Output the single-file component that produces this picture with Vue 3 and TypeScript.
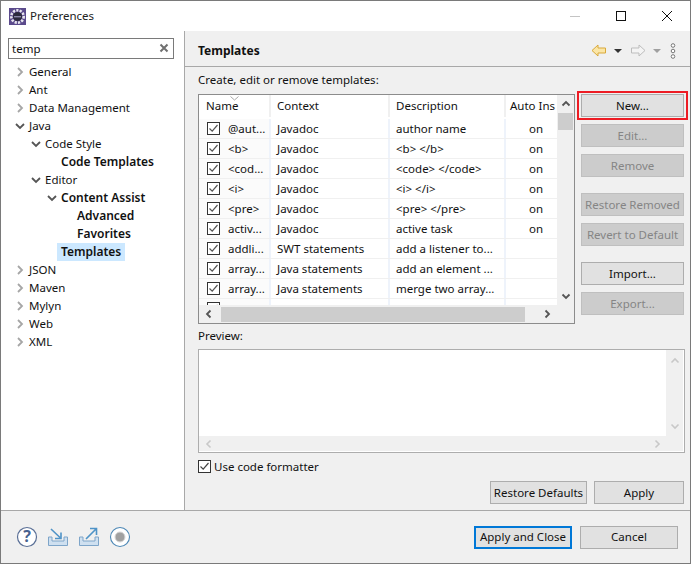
<script setup lang="ts">
interface TreeItem { label: string; level: number; arrow?: 'right' | 'down'; bold?: boolean; selected?: boolean }
const tree: TreeItem[] = [
  { label: 'General', level: 0, arrow: 'right' },
  { label: 'Ant', level: 0, arrow: 'right' },
  { label: 'Data Management', level: 0, arrow: 'right' },
  { label: 'Java', level: 0, arrow: 'down' },
  { label: 'Code Style', level: 1, arrow: 'down' },
  { label: 'Code Templates', level: 2, bold: true },
  { label: 'Editor', level: 1, arrow: 'down' },
  { label: 'Content Assist', level: 2, arrow: 'down', bold: true },
  { label: 'Advanced', level: 3, bold: true },
  { label: 'Favorites', level: 3, bold: true },
  { label: 'Templates', level: 2, bold: true, selected: true },
  { label: 'JSON', level: 0, arrow: 'right' },
  { label: 'Maven', level: 0, arrow: 'right' },
  { label: 'Mylyn', level: 0, arrow: 'right' },
  { label: 'Web', level: 0, arrow: 'right' },
  { label: 'XML', level: 0, arrow: 'right' },
]
const rows = [
  ['@aut...', 'Javadoc', 'author name', 'on'],
  ['<b>', 'Javadoc', '<b> </b>', 'on'],
  ['<cod...', 'Javadoc', '<code> </code>', 'on'],
  ['<i>', 'Javadoc', '<i> </i>', 'on'],
  ['<pre>', 'Javadoc', '<pre> </pre>', 'on'],
  ['activ...', 'Javadoc', 'active task', 'on'],
  ['addli...', 'SWT statements', 'add a listener to...', ''],
  ['array...', 'Java statements', 'add an element ...', ''],
  ['array...', 'Java statements', 'merge two array...', ''],
  ['bu...', 'Java specific', 'Sets the current ...', ''],
]
const sideButtons = [
  { label: 'New...', off: false, gap: 0 },
  { label: 'Edit...', off: true, gap: 7 },
  { label: 'Remove', off: true, gap: 7 },
  { label: 'Restore Removed', off: true, gap: 16 },
  { label: 'Revert to Default', off: true, gap: 7 },
  { label: 'Import...', off: false, gap: 16 },
  { label: 'Export...', off: true, gap: 7 },
]
</script>

<template>
  <div class="window">
    <header class="titlebar">
      <svg class="app-icon" width="17" height="17" viewBox="0 0 17 17">
        <rect width="17" height="17" fill="#5b4a8c" />
        <circle cx="8.5" cy="8.5" r="6.2" fill="none" stroke="#e8e6ee" stroke-width="2.6" stroke-dasharray="2.2 1.2" />
        <circle cx="8.5" cy="8.5" r="4.6" fill="#2c2a3c" />
        <rect x="5" y="8" width="7" height="1.4" fill="#8a86a8" />
      </svg>
      <span class="title">Preferences</span>
      <div class="win-controls">
        <svg width="12" height="12" viewBox="0 0 12 12"><line x1="1" y1="6.5" x2="11" y2="6.5" stroke="#c4c4c4" /></svg>
        <svg width="12" height="12" viewBox="0 0 12 12"><rect x="1.5" y="1.5" width="9" height="9" fill="none" stroke="#111" /></svg>
        <svg width="12" height="12" viewBox="0 0 12 12"><path d="M1 1 L11 11 M11 1 L1 11" stroke="#111" fill="none" /></svg>
      </div>
    </header>

    <div class="main">
      <aside class="left">
        <div class="search">
          <span>temp</span>
          <svg width="10" height="10" viewBox="0 0 10 10"><path d="M1.5 1.5 L8.5 8.5 M8.5 1.5 L1.5 8.5" stroke="#707070" stroke-width="2" /></svg>
        </div>
        <ul class="tree">
          <li v-for="item in tree" :key="item.label" class="node" :class="'lv' + item.level">
            <span class="arrow">
              <svg v-if="item.arrow === 'right'" width="8" height="10" viewBox="0 0 8 10"><path d="M2 1 L6 5 L2 9" fill="none" stroke="#a6a6a6" stroke-width="1.8" /></svg>
              <svg v-else-if="item.arrow === 'down'" width="10" height="8" viewBox="0 0 10 8"><path d="M1 2 L5 6 L9 2" fill="none" stroke="#555" stroke-width="1.8" /></svg>
            </span>
            <span class="label" :class="{ bold: item.bold, selected: item.selected }">{{ item.label }}</span>
          </li>
        </ul>
      </aside>

      <section class="right">
        <div class="page-head">
          <h1>Templates</h1>
          <div class="nav">
            <svg width="16" height="13" viewBox="0 0 16 13"><path d="M1 6.5 L7 1 V4 H14.5 V9 H7 V12 Z" fill="#fbe6a6" stroke="#d9a93a" /></svg>
            <i class="caret dark"></i>
            <svg width="16" height="13" viewBox="0 0 16 13"><path d="M15 6.5 L9 1 V4 H1.5 V9 H9 V12 Z" fill="#f4f4f4" stroke="#bdbdbd" /></svg>
            <i class="caret"></i>
            <svg class="dots" width="6" height="16" viewBox="0 0 6 16"><g fill="#fff" stroke="#777"><circle cx="3" cy="2.5" r="1.8" /><circle cx="3" cy="8" r="1.8" /><circle cx="3" cy="13.5" r="1.8" /></g></svg>
          </div>
        </div>

        <div class="body">
          <p class="caption">Create, edit or remove templates:</p>
          <div class="table-area">
            <div class="table">
              <div class="table-top">
                <div class="cells">
                  <div class="row head">
                    <span class="c name">Name<svg class="sort" width="9" height="5" viewBox="0 0 9 5"><path d="M0.5 0.5 L4.5 4 L8.5 0.5" fill="none" stroke="#a8a8a8" /></svg></span>
                    <span class="c ctx">Context</span>
                    <span class="c desc">Description</span>
                    <span class="c auto">Auto Ins</span>
                  </div>
                  <div v-for="(r, i) in rows" :key="i" class="row">
                    <span class="c name">
                      <svg class="check" width="13" height="13" viewBox="0 0 13 13"><rect x="0.5" y="0.5" width="12" height="12" fill="#fff" stroke="#333" /><path d="M2.5 6.5 L5.2 9.2 L10.5 3" fill="none" stroke="#555" stroke-width="1.2" /></svg>
                      <span>{{ r[0] }}</span>
                    </span>
                    <span class="c ctx">{{ r[1] }}</span>
                    <span class="c desc">{{ r[2] }}</span>
                    <span class="c auto on">{{ r[3] }}</span>
                  </div>
                </div>
                <div class="vbar">
                  <svg width="10" height="7" viewBox="0 0 10 7"><path d="M1.5 5.5 L5 2 L8.5 5.5" fill="none" stroke="#555" stroke-width="1.8" /></svg>
                  <div class="vthumb"></div>
                  <svg class="vdown" width="10" height="7" viewBox="0 0 10 7"><path d="M1.5 1.5 L5 5 L8.5 1.5" fill="none" stroke="#555" stroke-width="1.8" /></svg>
                </div>
              </div>
              <div class="hbar">
                <svg width="7" height="10" viewBox="0 0 7 10"><path d="M5.5 1.5 L2 5 L5.5 8.5" fill="none" stroke="#555" stroke-width="1.8" /></svg>
                <div class="hthumb"></div>
                <svg width="7" height="10" viewBox="0 0 7 10"><path d="M1.5 1.5 L5 5 L1.5 8.5" fill="none" stroke="#555" stroke-width="1.8" /></svg>
              </div>
            </div>
            <div class="side">
              <button
                v-for="(b, i) in sideButtons"
                :key="b.label"
                class="btn"
                :class="{ off: b.off, marked: i === 0 }"
                :style="{ marginTop: b.gap + 'px' }"
              >{{ b.label }}</button>
            </div>
          </div>

          <p class="preview-label">Preview:</p>
          <div class="preview">
            <div class="preview-top">
              <div class="preview-text"></div>
              <div class="preview-vbar">
                <svg width="10" height="7" viewBox="0 0 10 7"><path d="M1.5 5.5 L5 2 L8.5 5.5" fill="none" stroke="#c8c8c8" stroke-width="1.6" /></svg>
                <svg width="10" height="7" viewBox="0 0 10 7"><path d="M1.5 1.5 L5 5 L8.5 1.5" fill="none" stroke="#c8c8c8" stroke-width="1.6" /></svg>
              </div>
            </div>
            <div class="preview-bar">
              <svg width="7" height="10" viewBox="0 0 7 10"><path d="M5.5 1.5 L2 5 L5.5 8.5" fill="none" stroke="#c8c8c8" stroke-width="1.6" /></svg>
              <svg width="7" height="10" viewBox="0 0 7 10"><path d="M1.5 1.5 L5 5 L1.5 8.5" fill="none" stroke="#c8c8c8" stroke-width="1.6" /></svg>
            </div>
          </div>
          <label class="formatter">
            <svg width="13" height="13" viewBox="0 0 13 13"><rect x="0.5" y="0.5" width="12" height="12" fill="#fff" stroke="#333" /><path d="M2.5 6.5 L5.2 9.2 L10.5 3" fill="none" stroke="#444" stroke-width="1.2" /></svg>
            <span>Use code formatter</span>
          </label>
          <div class="page-actions">
            <button class="btn restore">Restore Defaults</button>
            <button class="btn apply">Apply</button>
          </div>
        </div>
      </section>
    </div>

    <footer class="footer">
      <div class="foot-icons">
        <svg width="22" height="22" viewBox="0 0 22 22"><circle cx="11" cy="11" r="9.5" fill="#fff" stroke="#5a6f96" stroke-width="1.2" /><text x="11" y="16" text-anchor="middle" class="qmark">?</text></svg>
        <svg width="22" height="22" viewBox="0 0 22 22"><path d="M1.5 11 V19.5 H20.5 V11 H17 V15 H5 V11 Z" fill="#cfe0f0" stroke="#7ea5c9" /><path d="M4 3 L13 11.5 M14 6.5 V12.5 H8" fill="none" stroke="#4f93c7" stroke-width="1.6" /></svg>
        <svg width="22" height="22" viewBox="0 0 22 22"><path d="M1.5 11 V19.5 H20.5 V11 H17 V15 H5 V11 Z" fill="#cfe0f0" stroke="#7ea5c9" /><path d="M8 13 L18 3 M12 2.5 H18.5 V9" fill="none" stroke="#4f93c7" stroke-width="1.6" /></svg>
        <svg width="22" height="22" viewBox="0 0 22 22"><circle cx="11" cy="11" r="9.5" fill="#fff" stroke="#4c87b5" stroke-width="1.1" /><circle cx="11" cy="11" r="5" fill="#a0a0a0" stroke="#d8d8d8" /></svg>
      </div>
      <div class="foot-actions">
        <button class="btn primary">Apply and Close</button>
        <button class="btn cancel">Cancel</button>
      </div>
    </footer>
  </div>
</template>

<style>
html, body { margin: 0; background: #fff; }
</style>

<style scoped>
.window {
  width: 691px;
  height: 564px;
  box-sizing: border-box;
  border: 1px solid #7a7a7a;
  display: flex;
  flex-direction: column;
  overflow: hidden;
  font-family: "Noto Sans", "Open Sans", sans-serif;
  font-size: 11.5px;
  color: #111;
  background: #f0f0f0;
}
.titlebar {
  height: 30px;
  flex: none;
  display: flex;
  align-items: center;
  background: #fff;
  padding-left: 8px;
}
.app-icon { margin-right: 4px; }
.title { color: #222; padding-bottom: 1px; }
.win-controls {
  margin-left: auto;
  display: flex;
  gap: 34px;
  padding-right: 17px;
}
.main { flex: 1; display: flex; min-height: 0; }
.left {
  flex: none;
  background: #fff;
  border-right: 1px solid #a8a8a8;
  padding: 7px 0 0 7px;
  box-sizing: content-box;
  width: 176px;
}
.search {
  width: 166px;
  height: 21px;
  box-sizing: border-box;
  border: 1px solid #7a7a7a;
  display: flex;
  align-items: center;
  justify-content: space-between;
  padding: 0 4px 1px 3px;
}
.tree { list-style: none; margin: 4px 0 0; padding: 0; }
.node {
  height: 18px;
  display: flex;
  align-items: center;
  white-space: nowrap;
  margin-left: -2px;
}
.lv0 { padding-left: 5px; }
.lv1 { padding-left: 21px; }
.lv2 { padding-left: 37px; }
.lv3 { padding-left: 53px; }
.arrow {
  width: 16px;
  flex: none;
  display: flex;
  align-items: center;
  justify-content: center;
  position: relative;
  left: 1px;
}
.label { padding: 0 2px 1px; }
.label.bold { font-weight: 600; font-size: 12px; }
.label.selected { background: #cce8ff; margin-left: -2px; padding: 0 4px 1px; height: 18px; line-height: 17px; box-sizing: border-box; }
.right { flex: 1; min-width: 0; display: flex; flex-direction: column; }
.page-head {
  flex: none;
  border-bottom: 1px solid #a8a8a8;
  display: flex;
  align-items: center;
  justify-content: space-between;
  padding: 4px 13px 0;
  box-sizing: content-box;
  height: 31px;
}
.page-head h1 { margin: 0; font-size: 12px; font-weight: 700; }
.nav { display: flex; align-items: center; gap: 4px; }
.caret {
  width: 0;
  height: 0;
  border: 4px solid transparent;
  border-top: 4px solid #a0a0a0;
  border-bottom: 0;
  margin: 0 4px 0 3px;
}
.caret.dark { border-top-color: #333; margin-right: 4px; }
.dots { margin-left: 1px; margin-right: 1px; }
.body { flex: 1; padding: 0 5px 0 13px; display: flex; flex-direction: column; min-height: 0; }
.caption { margin: 4px 0 0; height: 23px; line-height: 18px; }
.table-area { display: flex; gap: 6px; align-items: flex-start; }
.table {
  width: 377px;
  height: 230px;
  box-sizing: border-box;
  border: 1px solid #8c8c8c;
  background: #fff;
  display: flex;
  flex-direction: column;
}
.table-top { height: 210px; display: flex; flex: none; }
.cells { flex: 1; min-width: 0; overflow: hidden; }
.row {
  display: grid;
  grid-template-columns: 72px 119px 116px 50px;
  height: 20px;
  border-bottom: 1px solid #f0f0f0;
  box-sizing: border-box;
}
.row.head { height: 24px; border-bottom: 0; padding-bottom: 2px; }
.c {
  display: flex;
  align-items: center;
  white-space: nowrap;
  overflow: hidden;
  padding-left: 6px;
  padding-bottom: 1px;
  border-right: 2px solid #eef3fb;
  position: relative;
}
.head .c { border-right-color: #f0f0f0; }
.head .name { padding-left: 7px; }
.row:not(.head) .name { background: #fbfbfb; padding-left: 8px; gap: 8px; }
.sort { position: absolute; left: 31px; top: 1px; }
.auto { border-right: 0; }
.on { justify-content: center; padding-left: 10px; }
.head .auto { padding-left: 4px; }
.vbar {
  width: 17px;
  flex: none;
  display: flex;
  flex-direction: column;
  align-items: center;
  padding-top: 5px;
  box-sizing: border-box;
  background: #f0f0f0;
}
.vthumb { width: 15px; height: 17px; background: #cdcdcd; margin-top: 6px; }
.vdown { margin-top: auto; margin-bottom: 5px; }
.hbar {
  height: 18px;
  display: flex;
  align-items: center;
  justify-content: space-between;
  background: #f0f0f0;
  padding: 0 23px 0 6px;
  gap: 6px;
  flex: none;
}
.hthumb { flex: 1; height: 15px; background: #cdcdcd; margin: 0 13px 0 3px; }
.side { width: 103px; display: flex; flex-direction: column; position: relative; }
.btn {
  display: block;
  box-sizing: border-box;
  height: 23px;
  padding: 0 0 1px;
  font: inherit;
  color: #111;
  background: #e1e1e1;
  border: 1px solid #adadad;
  white-space: nowrap;
}
.btn.off { background: #cccccc; border-color: #bfbfbf; color: #858585; }
.marked { position: relative; }
.marked::after {
  content: "";
  position: absolute;
  left: -5px;
  right: -5px;
  top: -4px;
  bottom: -4px;
  border: 2px solid #ed1c24;
}
.preview-label { margin: 4px 0 0; height: 21px; line-height: 16px; }
.preview {
  height: 104px;
  box-sizing: border-box;
  border: 1px solid #adadad;
  box-shadow: inset -1px -1px 0 #fff;
  display: flex;
  flex-direction: column;
}
.preview-top { flex: 1; min-height: 0; display: flex; }
.preview-text { flex: 1; background: #fff; }
.preview-vbar {
  width: 18px;
  flex: none;
  display: flex;
  flex-direction: column;
  justify-content: space-between;
  align-items: center;
  padding: 7px 1px 6px 0;
  box-sizing: border-box;
}
.preview-bar {
  height: 16px;
  flex: none;
  display: flex;
  align-items: center;
  justify-content: space-between;
  padding: 0 23px 0 6px;
}
.formatter { display: flex; align-items: center; gap: 3px; height: 18px; margin-top: 5px; padding-bottom: 1px; box-sizing: border-box; }
.page-actions { display: flex; justify-content: flex-end; gap: 7px; margin-top: 5px; padding-right: 1px; }
.restore { width: 97px; }
.apply { width: 90px; }
.footer {
  height: 53px;
  flex: none;
  border-top: 1px solid #a8a8a8;
  display: flex;
  align-items: center;
  justify-content: space-between;
  padding: 0 12px 0 15px;
  box-sizing: border-box;
}
.foot-icons { display: flex; gap: 9px; align-items: center; }
.qmark { font-size: 16px; font-weight: 700; fill: #46628f; }
.foot-actions { display: flex; gap: 8px; }
.primary { width: 98px; border: 2px solid #0078d7; }
.cancel { width: 98px; }
</style>
